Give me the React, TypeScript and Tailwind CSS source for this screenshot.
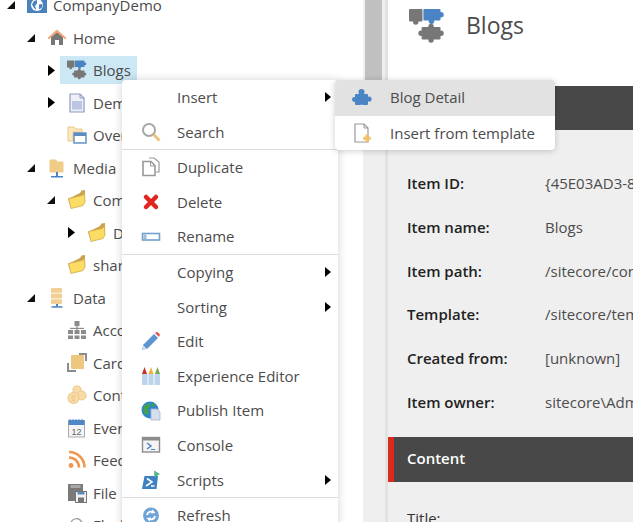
import React from "react";

type I = React.ReactNode;
const S = ({ children, size = 20 }: { children: I; size?: number }) => (
  <svg width={size} height={size} viewBox="0 0 20 20" className="shrink-0 block">{children}</svg>
);

const Down = () => (
  <svg width="8" height="8" viewBox="0 0 8 8" className="block"><path d="M8 0V8H0Z" fill="#111" /></svg>
);
const Right = () => (
  <svg width="7" height="11" viewBox="0 0 7 11" className="block"><path d="M0 0L7 5.5L0 11Z" fill="#000" /></svg>
);
const MenuArrow = () => (
  <svg width="6" height="10" viewBox="0 0 6 10" className="block"><path d="M0 0L6 5L0 10Z" fill="#000" /></svg>
);

const Piece = ({ x, y, w, h, c, k }: { x: number; y: number; w: number; h: number; c: string; k: string }) => (
  <g fill={c}>
    <rect x={x} y={y} width={w} height={h} rx="0.6" />
    {k.includes("t") && <circle cx={x + w / 2} cy={y - 0.3} r="1.5" />}
    {k.includes("b") && <circle cx={x + w / 2} cy={y + h + 0.3} r="1.5" />}
    {k.includes("l") && <circle cx={x - 0.3} cy={y + h / 2} r="1.5" />}
    {k.includes("r") && <circle cx={x + w + 0.3} cy={y + h / 2} r="1.5" />}
  </g>
);

const Puzzles = ({ size = 20 }: { size?: number }) => (
  <S size={size}>
    <Piece x={0} y={0.5} w={7.5} h={7} c="#777" k="b" />
    <Piece x={8} y={0.5} w={9.5} h={6.5} c="#4a84c4" k="r" />
    <circle cx="12.5" cy="7.4" r="1.5" fill="#4a84c4" />
    <Piece x={7} y={10.5} w={10.5} h={7} c="#777" k="tblr" />
  </S>
);

const BluePiece = () => (
  <S size={20}>
    <rect x="3" y="6" width="13" height="11" rx="1" fill="#4a84c4" />
    <circle cx="9.5" cy="4" r="3" fill="#4a84c4" />
    <circle cx="17" cy="11" r="2.6" fill="#4a84c4" />
    <circle cx="2.4" cy="11.5" r="2.4" fill="#4a84c4" />
    <circle cx="9.5" cy="18" r="1.6" fill="#e2e2e2" />
  </S>
);

const Globe = () => (
  <S>
    <rect x="0" y="0" width="20" height="18" fill="#4a82bc" />
    <circle cx="10" cy="10" r="6" fill="#fff" />
    <path d="M7 6L10 5L10 8.5L8 11L9.5 15L7 13L5 9.5ZM12 9.5L15.5 9L15 12.5L12 14.5Z" fill="#4a82bc" />
  </S>
);
const Home = () => (
  <S>
    <path d="M4 9L10 4L16 9V17H12V12H8V17H4Z" fill="#777" />
    <path d="M0.5 10L10 1.5L19.5 10L18 11.2L10 4.2L2 11.2Z" fill="#f0a672" />
  </S>
);
const Doc = () => (
  <S>
    <path d="M3 1H13L17 5V19H3Z" fill="#eef0f8" stroke="#8c9cc0" strokeWidth="1.2" />
    <rect x="5" y="8" width="10" height="8.5" fill="#bcc6e4" />
    <path d="M13 1V5H17" fill="none" stroke="#8c9cc0" />
  </S>
);
const FolderWin = () => (
  <S>
    <path d="M1 16V2H7L9 4H15V7H6V16Z" fill="#fbe6bd" stroke="#eec88a" />
    <rect x="7" y="8" width="12" height="10" fill="#fff" stroke="#5b8cc0" strokeWidth="1.4" />
    <rect x="7" y="8" width="12" height="3" fill="#5b8cc0" />
  </S>
);
const MediaI = () => (
  <S>
    <path d="M3 2H9L10 4H16V14H3Z" fill="#f0cc85" stroke="#eecb8f" />
    <rect x="9" y="14" width="2" height="4" fill="#4a84c4" />
    <rect x="4" y="18" width="12" height="1.5" fill="#4a84c4" />
  </S>
);
const FolderOpen = () => (
  <S>
    <path d="M1 9L13 3L14.5 0.5L18 0V12L4 18Z" fill="#c9a34e" />
    <path d="M1.5 8.5L15 5.5L17.5 3.5L18 12L16 15.5L4 18.5Z" fill="#fbdd66" stroke="#d0aa4c" strokeWidth="0.8" />
  </S>
);
const DataI = () => (
  <S>
    <rect x="4" y="0" width="11" height="4.8" rx="1" fill="#f2cf94" />
    <rect x="4" y="5.6" width="11" height="4.8" rx="1" fill="#f2cf94" />
    <rect x="4" y="11.2" width="11" height="4.8" rx="1" fill="#f2cf94" />
    <rect x="9" y="16" width="2" height="2.5" fill="#4a84c4" />
    <rect x="4.5" y="18.2" width="11" height="1.5" fill="#4a84c4" />
  </S>
);
const Accounts = () => (
  <S>
    <g fill="#8c8c8c">
      <rect x="7.5" y="1" width="5" height="5" />
      <rect x="1" y="10" width="5" height="4" />
      <rect x="7.5" y="10" width="5" height="4" />
      <rect x="14" y="10" width="5" height="4" />
      <rect x="1" y="15.5" width="5" height="3.5" />
      <rect x="7.5" y="15.5" width="5" height="3.5" />
      <rect x="14" y="15.5" width="5" height="3.5" />
      <rect x="9.4" y="6" width="1.2" height="4" />
      <rect x="3" y="7.8" width="14" height="1.2" />
    </g>
  </S>
);
const Cards = () => (
  <S>
    <path d="M12 1H19V8" fill="none" stroke="#8c8c8c" strokeWidth="2" />
    <path d="M1 10V18H9" fill="none" stroke="#8c8c8c" strokeWidth="2" />
    <rect x="4" y="2" width="13" height="14" rx="1" fill="#eec77f" />
  </S>
);
const Coins = () => (
  <S>
    <g fill="#f7dca8" stroke="#eec88a" strokeWidth="1.2">
      <circle cx="10" cy="5" r="4" />
      <circle cx="14.5" cy="10.5" r="4.5" />
      <circle cx="6.5" cy="13" r="5.5" />
    </g>
    <rect x="5.3" y="10.5" width="2.4" height="5" fill="none" stroke="#eec88a" />
  </S>
);
const Calendar = () => (
  <S>
    <rect x="1.5" y="3" width="16" height="16" fill="#f4f4f4" stroke="#aaa" />
    <rect x="1.5" y="2" width="16" height="5" fill="#4f86c6" />
    <path d="M3 1V3M6 1V3M9 1V3M12 1V3M15 1V3" stroke="#4f86c6" />
    <text x="9.5" y="16.5" textAnchor="middle" fontSize="9" fontFamily="Liberation Sans, sans-serif" fill="#666">12</text>
  </S>
);
const Rss = () => (
  <S>
    <circle cx="4" cy="15.5" r="2.4" fill="#f09650" />
    <path d="M2 7.5A10 10 0 0 1 12 17.5" fill="none" stroke="#f09650" strokeWidth="2.6" />
    <path d="M2 2A15.5 15.5 0 0 1 17.5 17.5" fill="none" stroke="#f09650" strokeWidth="2.6" />
  </S>
);
const FileI = () => (
  <S>
    <path d="M1 1H16V9H9V18H1Z" fill="#7a7a7a" />
    <rect x="3.5" y="2" width="10" height="3" fill="#a8a8a8" />
    <rect x="8.5" y="8.5" width="11" height="11" fill="#f2f2f2" stroke="#777" />
    <rect x="10.5" y="9" width="7" height="2.5" fill="#5b8cc0" />
    <rect x="11" y="14.5" width="6" height="5" fill="#777" />
  </S>
);
const Cloud = () => (
  <S>
    <path d="M5 16A4 4 0 0 1 4 8.5A5.5 5.5 0 0 1 14.5 7A4.5 4.5 0 0 1 15 16Z" fill="#fff" stroke="#999" strokeWidth="1.2" />
  </S>
);
const Search = () => (
  <S>
    <circle cx="8" cy="8" r="6" fill="#fff" stroke="#a8a8a8" strokeWidth="2" />
    <path d="M12.5 12.5L18.5 18.5" stroke="#eec27c" strokeWidth="3" />
  </S>
);
const Dup = () => (
  <S>
    <path d="M8 1H13L18 5V15H15" fill="#fff" stroke="#999" strokeWidth="1.2" />
    <path d="M2 4.5H10L14 8.5V18.5H2Z" fill="#fff" stroke="#999" strokeWidth="1.6" />
    <path d="M9.5 4.5V9H14" fill="none" stroke="#999" />
  </S>
);
const Del = () => (
  <S>
    <path d="M5 5L15 15M15 5L5 15" stroke="#e0261e" strokeWidth="4.5" strokeLinecap="round" />
  </S>
);
const Rename = () => (
  <S>
    <rect x="1.5" y="6.5" width="17" height="6.5" fill="#fff" stroke="#74a0cc" strokeWidth="1.6" />
    <rect x="2.5" y="7.5" width="3" height="4.5" fill="#9cbcdc" />
  </S>
);
const Edit = () => (
  <S>
    <path d="M1 19L2.5 13.5L13 3L17 7L6.5 17.5Z" fill="#5b94d0" />
    <path d="M1 19L2.5 14.5L5.5 17.5Z" fill="#d0e0f0" />
    <path d="M14 2L16 0.8L19 3.6L18 6Z" fill="#e25050" />
  </S>
);
const Crayons = () => (
  <S>
    <path d="M1 8L3.5 1L6 8Z" fill="#cf2f2a" />
    <path d="M7.5 8L10 1L12.5 8Z" fill="#f0b238" />
    <path d="M14 8L16.5 1L19 8Z" fill="#7aa84a" />
    <rect x="1" y="8" width="18" height="11" fill="#bcd5ea" />
    <path d="M7 8V19M13 8V19" stroke="#f0f6fb" strokeWidth="1.2" />
  </S>
);
const Publish = () => (
  <S>
    <circle cx="9" cy="9" r="8.5" fill="#2f86c8" />
    <path d="M3 5L8 2L10 5L6 8L8 12L5 14L2 10Z" fill="#45a148" />
    <path d="M11 1.5L15 4L12 6Z" fill="#45a148" />
    <path d="M10 8H16L19 11V19H10Z" fill="#d5dff0" stroke="#a8b4cc" strokeWidth="0.8" />
  </S>
);
const ConsoleI = () => (
  <S>
    <rect x="1.5" y="2.5" width="17" height="14.5" fill="#f4f4f4" stroke="#8c8c8c" strokeWidth="1.4" />
    <rect x="1.5" y="2.5" width="17" height="3" fill="#8c8c8c" />
    <path d="M6 8L10 11L6 14" fill="none" stroke="#4a84c4" strokeWidth="1.5" />
    <path d="M10 14.5H14" stroke="#4a84c4" />
  </S>
);
const Scripts = () => (
  <S>
    <path d="M3.5 6H17L15.5 19H1Z" fill="#3d80c4" />
    <path d="M6 8.5L11 12L5 16M10 16H13.5" fill="none" stroke="#fff" strokeWidth="1.6" />
    <path d="M13 0.5L19 4L13.5 7.5Z" fill="#58b48c" />
  </S>
);
const Refresh = () => (
  <S>
    <circle cx="10" cy="10.5" r="8" fill="#6ea4d8" />
    <path d="M6 10A4 4 0 0 1 12.5 7.5M14 11A4 4 0 0 1 7.5 13.5" fill="none" stroke="#fff" strokeWidth="1.8" />
    <path d="M11.5 4.5L14.5 8L10 8.5Z M8.5 16.5L5.5 13L10 12.5Z" fill="#fff" />
  </S>
);
const DocPlus = () => (
  <S>
    <path d="M3 1H12L16 5V19H3Z" fill="#fff" stroke="#999" strokeWidth="1.2" />
    <path d="M12 1V5H16" fill="none" stroke="#999" />
    <path d="M15 11.5V19M11.2 15.2H18.8" stroke="#f2c267" strokeWidth="3" />
  </S>
);

const levels = ["pl-[7px]", "pl-[27px]", "pl-[47px]", "pl-[67px]"];
const rows: { l: number; a?: "d" | "r"; i: I; t: string; sel?: boolean }[] = [
  { l: 0, a: "d", i: <Globe />, t: "CompanyDemo" },
  { l: 1, a: "d", i: <Home />, t: "Home" },
  { l: 2, a: "r", i: <Puzzles />, t: "Blogs", sel: true },
  { l: 2, a: "r", i: <Doc />, t: "Demo" },
  { l: 2, i: <FolderWin />, t: "Overview" },
  { l: 1, a: "d", i: <MediaI />, t: "Media" },
  { l: 2, a: "d", i: <FolderOpen />, t: "Company" },
  { l: 3, a: "r", i: <FolderOpen />, t: "Demo" },
  { l: 2, i: <FolderOpen />, t: "shared" },
  { l: 1, a: "d", i: <DataI />, t: "Data" },
  { l: 2, i: <Accounts />, t: "Accounts" },
  { l: 2, i: <Cards />, t: "Cards" },
  { l: 2, i: <Coins />, t: "Content" },
  { l: 2, i: <Calendar />, t: "Events" },
  { l: 2, i: <Rss />, t: "Feeds" },
  { l: 2, i: <FileI />, t: "File" },
  { l: 2, i: <Cloud />, t: "Flash" },
];

const Tree = () => (
  <div className="w-[363px] shrink-0 -mt-[11px]">
    {rows.map((r, n) => (
      <div key={n} className={`h-[32.5px] flex items-center ${levels[r.l]}`}>
        <span className="w-[20px] shrink-0 flex items-center">{r.a === "d" ? <Down /> : r.a === "r" ? <span className="ml-[1px]"><Right /></span> : null}</span>
        <span className={`flex items-center h-[28px] gap-[6px] pr-[6px] -ml-[7px] pl-[7px] ${r.sel ? "bg-[#cde8f5]" : ""}`}>
          {r.i}
          <span className="text-[15px] text-[#4c4c4c] whitespace-nowrap">{r.t}</span>
        </span>
      </div>
    ))}
  </div>
);

const menu: ({ t: string; i?: I; sub?: boolean } | "sep")[] = [
  { t: "Insert", sub: true },
  { t: "Search", i: <Search /> },
  "sep",
  { t: "Duplicate", i: <Dup /> },
  { t: "Delete", i: <Del /> },
  { t: "Rename", i: <Rename /> },
  "sep",
  { t: "Copying", sub: true },
  { t: "Sorting", sub: true },
  { t: "Edit", i: <Edit /> },
  { t: "Experience Editor", i: <Crayons /> },
  { t: "Publish Item", i: <Publish /> },
  { t: "Console", i: <ConsoleI /> },
  { t: "Scripts", i: <Scripts />, sub: true },
  "sep",
  { t: "Refresh", i: <Refresh /> },
];

const Menu = () => (
  <div className="absolute left-[122px] top-[80px] w-[216px] bg-white rounded-[4px] shadow-[0_0_10px_rgba(0,0,0,0.18)]">
    {menu.map((m, n) =>
      m === "sep" ? (
        <div key={n} className="h-[1px] bg-[#dcdcdc]" />
      ) : (
        <div key={n} className="h-[34.6px] flex items-center pl-[19px] pr-[7px] text-[15px] text-[#4c4c4c]">
          <span className="w-[20px] shrink-0">{m.i}</span>
          <span className="ml-[16px] flex-1 whitespace-nowrap">{m.t}</span>
          {m.sub && <MenuArrow />}
        </div>
      )
    )}
  </div>
);

const SubMenu = () => (
  <div className="absolute left-[335px] top-[80px] w-[220px] bg-white rounded-[4px] overflow-hidden shadow-[0_1px_6px_rgba(0,0,0,0.2)] text-[15px] text-[#4c4c4c]">
    <div className="h-[36px] pb-[1px] bg-[#e2e2e2] flex items-center pl-[17px] gap-[18px]">
      <BluePiece />
      <span>Blog Detail</span>
    </div>
    <div className="h-[34px] flex items-center pl-[17px] gap-[18px]">
      <DocPlus />
      <span>Insert from template</span>
    </div>
  </div>
);

const fields = [
  ["Item ID:", "{45E03AD3-8"],
  ["Item name:", "Blogs"],
  ["Item path:", "/sitecore/content"],
  ["Template:", "/sitecore/templates"],
  ["Created from:", "[unknown]"],
  ["Item owner:", "sitecore\\Admin"],
];

const Detail = () => (
  <div className="flex-1 min-w-0 overflow-hidden flex flex-col bg-[#efefef]">
    <div className="h-[86px] shrink-0 bg-white flex items-start pl-[21px] pt-[8px]">
      <Puzzles size={36} />
      <span className="ml-[21px] text-[23px] leading-[34px] text-[#4c4c4c]">Blogs</span>
    </div>
    <div className="h-[44px] shrink-0 bg-[#484848]" />
    <div className="pt-[32px] pb-[12px] shrink-0">
      {fields.map(([k, v]) => (
        <div key={k} className="h-[43.8px] flex items-start text-[15px] leading-[42px] whitespace-nowrap">
          <span className="w-[138px] shrink-0 ml-[19px] font-semibold text-[#222]">{k}</span>
          <span className="text-[#4c4c4c]">{v}</span>
        </div>
      ))}
    </div>
    <div className="h-[45px] shrink-0 bg-[#484848] border-l-[6px] border-[#dc291e] flex items-center pl-[13px] pb-[2px] text-[15px] font-semibold text-white">Content</div>
    <div className="pl-[19px] pt-[25px] text-[15px] text-[#333]">Title:</div>
  </div>
);

export default function App() {
  return (
    <div className="relative w-[633px] h-[522px] overflow-hidden bg-white flex font-['Open_Sans',sans-serif]">
      <Tree />
      <div className="w-[22px] shrink-0 bg-[#efefef] pl-[2px]">
        <div className="w-[17px] h-[130px] bg-[#c0c0c0]" />
      </div>
      <div className="w-[3px] shrink-0 bg-[#e2e2e2]" />
      <Detail />
      <Menu />
      <SubMenu />
    </div>
  );
}
